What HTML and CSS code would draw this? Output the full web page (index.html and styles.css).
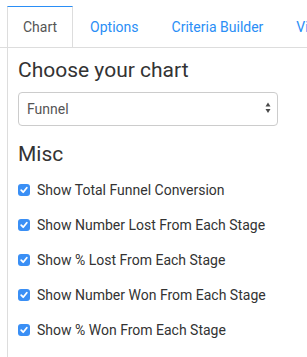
FILE: index.html
```html
<!DOCTYPE html>
<html>
<head>
<meta charset="utf-8">
<link rel="stylesheet" href="styles.css">
</head>
<body>
<ul class="tabs">
  <li class="tab active"><a>Chart</a></li>
  <li class="tab"><a>Options</a></li>
  <li class="tab"><a>Criteria Builder</a></li>
  <li class="tab"><a>Views</a></li>
</ul>
<div class="panel">
  <h3 class="heading">Choose your chart</h3>
  <div class="select-wrap">
    <select class="select"><option>Funnel</option></select>
    <svg class="arrows" width="8" height="12" viewBox="0 0 8 12"><path d="M4 0.5 L6.5 4.5 L1.5 4.5 Z M1.5 7 L6.5 7 L4 11 Z" fill="#4a4a4a"/></svg>
  </div>
  <h3 class="heading misc">Misc</h3>
  <label class="row"><span class="cb"><svg width="12" height="12" viewBox="0 0 12 12"><path d="M3.2 6.2 L5.2 8.2 L8.8 3.8" fill="none" stroke="#fff" stroke-width="1.8" stroke-linecap="round" stroke-linejoin="round"/></svg></span>Show Total Funnel Conversion</label>
  <label class="row"><span class="cb"><svg width="12" height="12" viewBox="0 0 12 12"><path d="M3.2 6.2 L5.2 8.2 L8.8 3.8" fill="none" stroke="#fff" stroke-width="1.8" stroke-linecap="round" stroke-linejoin="round"/></svg></span>Show Number Lost From Each Stage</label>
  <label class="row"><span class="cb"><svg width="12" height="12" viewBox="0 0 12 12"><path d="M3.2 6.2 L5.2 8.2 L8.8 3.8" fill="none" stroke="#fff" stroke-width="1.8" stroke-linecap="round" stroke-linejoin="round"/></svg></span>Show % Lost From Each Stage</label>
  <label class="row"><span class="cb"><svg width="12" height="12" viewBox="0 0 12 12"><path d="M3.2 6.2 L5.2 8.2 L8.8 3.8" fill="none" stroke="#fff" stroke-width="1.8" stroke-linecap="round" stroke-linejoin="round"/></svg></span>Show Number Won From Each Stage</label>
  <label class="row"><span class="cb"><svg width="12" height="12" viewBox="0 0 12 12"><path d="M3.2 6.2 L5.2 8.2 L8.8 3.8" fill="none" stroke="#fff" stroke-width="1.8" stroke-linecap="round" stroke-linejoin="round"/></svg></span>Show % Won From Each Stage</label>
</div>
</body>
</html>
```
FILE: styles.css
```css
html, body {
  margin: 0;
  padding: 0;
  background: #fff;
  overflow: hidden;
}
body {
  font-family: Roboto, "Liberation Sans", sans-serif;
  font-size: 14px;
  line-height: 20px;
  color: #333;
  padding-top: 6px;
  height: 351px;
}
.tabs {
  list-style: none;
  margin: 0;
  padding: 0 0 0 7px;
  display: flex;
  white-space: nowrap;
  border-bottom: 1px solid #ddd;
  overflow: hidden;
}
.tab {
  margin-bottom: -1px;
  margin-right: 1px;
  flex: none;
}
.tab a {
  display: block;
  padding: 10px 15px;
  border: 1px solid transparent;
  color: #2a8ef6;
}
.tab.active a {
  color: #555;
  background: #fff;
  border-color: #ddd;
  border-top-color: #2a8ef6;
  border-bottom-color: #fff;
}
.panel {
  margin-left: 7px;
  border-left: 1px solid #ddd;
  padding: 11px 0 0 10px;
  height: 309px;
  box-sizing: border-box;
  overflow: hidden;
}
.heading {
  margin: 0 0 10px;
  font-size: 21px;
  font-weight: 400;
  line-height: 1.1;
  color: #333;
}
.misc {
  margin-top: 17px;
  margin-bottom: 14px;
}
.select-wrap {
  position: relative;
  width: 260px;
}
.select {
  appearance: none;
  -webkit-appearance: none;
  display: block;
  width: 260px;
  height: 34px;
  box-sizing: border-box;
  border: 1px solid #ccc;
  border-radius: 4px;
  background: #fff;
  padding: 0 8px;
  font-family: Roboto, "Liberation Sans", sans-serif;
  font-size: 14px;
  color: #555;
}
.arrows {
  position: absolute;
  right: 6px;
  top: 10px;
}
.row {
  display: flex;
  align-items: center;
  height: 20px;
  margin-bottom: 15px;
  color: #333;
}
.cb {
  width: 12px;
  height: 12px;
  border-radius: 3px;
  background: #3a8ff5;
  margin-right: 7px;
  display: flex;
  flex: none;
}
```
